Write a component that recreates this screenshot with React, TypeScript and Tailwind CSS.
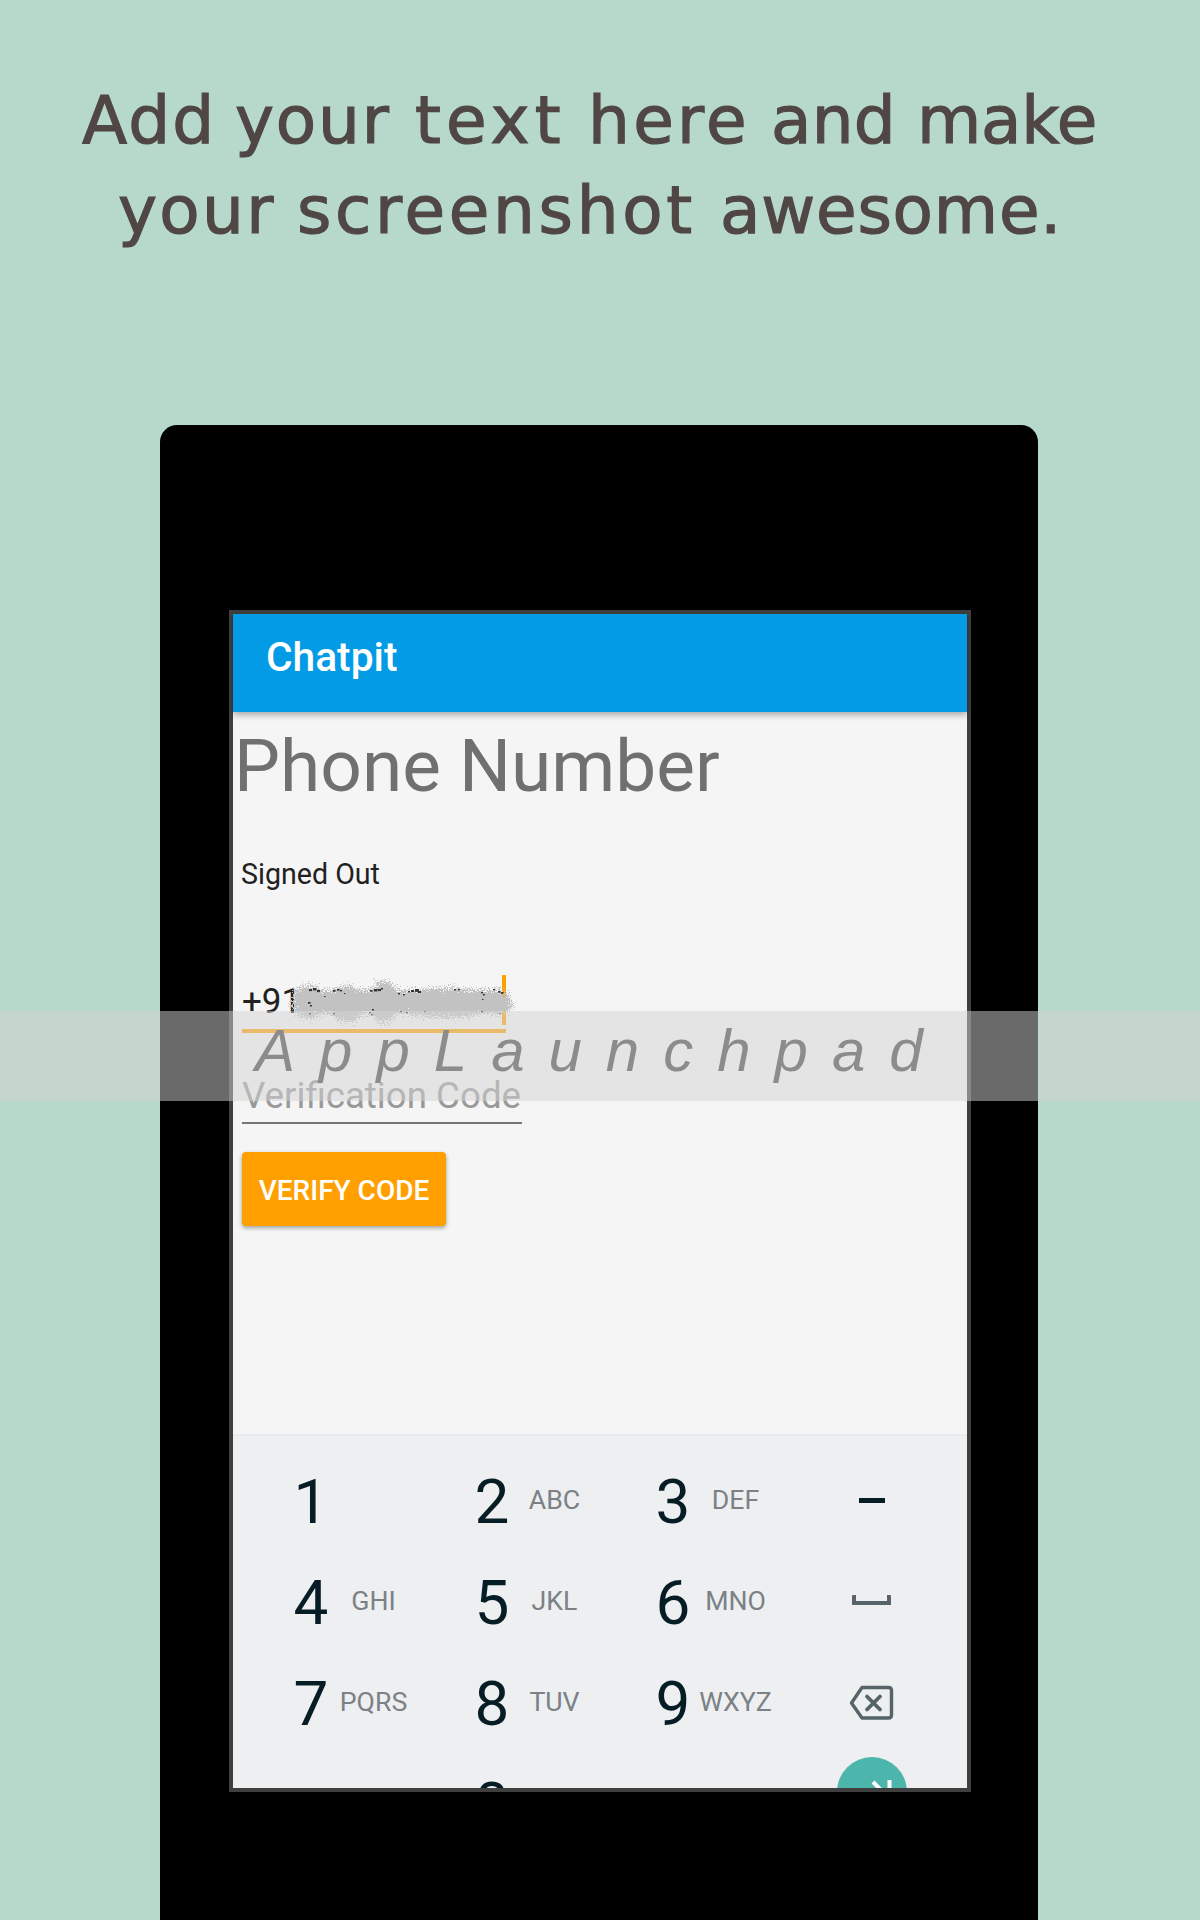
const headline = [
  [
    { text: "Add", style: "w-[153px] tracking-[2.2px]" },
    { text: "your", style: "w-[180px] tracking-[1.8px]" },
    { text: "text", style: "w-[173px] tracking-[5.1px]" },
    { text: "here", style: "w-[183px] tracking-[3.3px]" },
    { text: "and", style: "w-[146px] tracking-[0.2px]" },
    { text: "make", style: "w-[180px] tracking-[-0.3px]" },
  ],
  [
    { text: "your", style: "w-[179px] tracking-[2.3px]" },
    { text: "screenshot", style: "w-[423px] tracking-[3.7px]" },
    { text: "awesome.", style: "w-[350px] tracking-[0.8px]" },
  ],
];

function Headline() {
  return (
    <h1 className="h-[425px] pt-[76px] font-['DejaVu_Sans',sans-serif] text-[66px] leading-[90px] text-[#504745] [-webkit-text-stroke:1.2px_#504745]">
      <div className="flex whitespace-pre pl-[82px]">
        {headline[0].map((w) => (
          <span key={w.text} className={`shrink-0 ${w.style}`}>{w.text}</span>
        ))}
      </div>
      <div className="flex whitespace-pre pl-[118px]">
        {headline[1].map((w) => (
          <span key={w.text} className={`shrink-0 ${w.style}`}>{w.text}</span>
        ))}
      </div>
    </h1>
  );
}

const specks = [
  [27, 19, 3], [31, 18, 3.500], [35, 20, 3], [51, 20, 2.500], [55, 19, 2.500], [58, 20, 2],
  [88, 20, 2.500], [92, 19, 3.500], [96, 19, 3], [99, 18, 2], [129, 20, 3], [133, 19, 4], [136, 21, 3],
  [26, 32, 2.500], [28, 35, 2], [27, 43, 2], [51, 43, 2], [87, 42, 2], [90, 39, 2], [89, 44, 2],
  [116, 23, 2], [118, 41, 2], [121, 24, 2], [126, 21, 2], [172, 19, 2], [176, 19, 2], [199, 22, 2],
  [201, 24, 2], [200, 29, 1.500], [199, 41, 2], [211, 19, 2], [216, 21, 2.500], [219, 22, 2.500],
  [217, 43, 1.500], [142, 41, 1.500], [62, 23, 1.500], [42, 26, 1.500], [124, 42, 2],
];

function Scribble() {
  return (
    <svg className="absolute -top-[11px] left-[40px]" width="240" height="60" viewBox="0 0 240 60">
      <defs>
        <filter id="rough" x="-10%" y="-30%" width="120%" height="160%">
          <feTurbulence type="fractalNoise" baseFrequency="0.8" numOctaves="2" seed="4" result="n" />
          <feDisplacementMap in="SourceGraphic" in2="n" scale="19" xChannelSelector="R" yChannelSelector="G" />
        </filter>
      </defs>
      <g filter="url(#rough)" fill="#c2c2c2">
        <ellipse cx="26" cy="32" rx="16" ry="17" />
        <rect x="14" y="20" width="212" height="24" rx="11" />
        <ellipse cx="65" cy="34" rx="18" ry="18" />
        <ellipse cx="102" cy="32" rx="15" ry="21" />
        <ellipse cx="164" cy="33" rx="55" ry="15" />
        <ellipse cx="217" cy="33" rx="13" ry="11" />
      </g>
      <g fill="#333">
        {specks.map(([x, y, s]) => (
          <rect key={`${x}-${y}`} x={x} y={y} width={s} height={s * 0.7} />
        ))}
      </g>
    </svg>
  );
}

const keys = [
  ["1", ""], ["2", "ABC"], ["3", "DEF"], ["minus", ""],
  ["4", "GHI"], ["5", "JKL"], ["6", "MNO"], ["space", ""],
  ["7", "PQRS"], ["8", "TUV"], ["9", "WXYZ"], ["delete", ""],
  ["", ""], ["0", ""], ["", ""], ["next", ""],
];

function KeyIcon({ name }: { name: string }) {
  if (name === "minus") return <span className="mb-[2px] h-[5px] w-[26px] bg-[#071d26]" />;
  if (name === "space")
    return <span className="mb-[5px] h-[10px] w-[39px] rounded-[1px] border-x-4 border-b-4 border-[#56646a]" />;
  if (name === "delete")
    return (
      <svg className="mr-px mb-[2px]" width="45" height="36" viewBox="0 0 45 36" fill="none" stroke="#56646a" strokeWidth="3.4" strokeLinejoin="round">
        <path d="M13 2.500h26.500q3 0 3 3v24.500q0 3-3 3H13L2.500 18z" />
        <path d="M16.500 11.500l13 13M29.500 11.500l-13 13" transform="translate(1.5 0)" strokeWidth="3.800" strokeLinecap="round" />
      </svg>
    );
  return (
    <span className="mt-[3px] grid h-[70px] w-[70px] shrink-0 place-items-center self-start rounded-full bg-[#4db6ac]">
      <svg width="46" height="30" viewBox="0 0 46 30" fill="none" stroke="#fff" strokeWidth="4">
        <path d="M4 17h27M24 5l12 12-12 12M40.500 3v27" />
      </svg>
    </span>
  );
}

function Keypad() {
  return (
    <div className="mt-auto grid h-[354px] shrink-0 auto-rows-[101px] grid-cols-[181px_181px_181px_97px] overflow-hidden border-t-2 border-[#e8eaec] bg-[#edeff1] pt-[15px] pl-[47px]">
      {keys.map(([main, sub], i) =>
        i % 4 === 3 ? (
          <div key={i} className="flex items-center justify-center">
            <KeyIcon name={main} />
          </div>
        ) : (
          <div key={i} className="flex items-center">
            <span className="flex w-[62px] justify-center text-[62px] leading-[80px] text-[#071d26]">{main}</span>
            <span className="flex w-[63px] justify-center pb-[4px] text-[26.700px] leading-[32px] text-[#7b8185]">{sub}</span>
          </div>
        ),
      )}
    </div>
  );
}

export default function App() {
  return (
    <main className="relative h-[1920px] w-[1200px] overflow-hidden bg-[#b7d9cb]">
      <Headline />
      <div className="ml-[160px] h-[1495px] w-[878px] rounded-t-[17px] bg-black pt-[185px] pl-[69px]">
        <div className="h-[1182px] w-[742px] border-4 border-[#3f3f3f] font-[Roboto,sans-serif]">
          <div className="flex h-[1174px] flex-col bg-[#f5f5f5]">
            <header className="flex h-[98px] shrink-0 items-center bg-[#039be5] pb-[10px] pl-[33px] text-[40.7px] font-medium text-white shadow-[0_3px_6px_rgba(0,0,0,0.3)]">
              Chatpit
            </header>
            <h2 className="mt-[11px] ml-px text-[73px] leading-[86px] whitespace-nowrap text-[#707070]">Phone Number</h2>
            <p className="mt-[49px] ml-[8px] text-[28.6px] leading-[32px] text-[#212121]">Signed Out</p>
            <div className="relative mt-[91px] ml-[9px] h-[52px] w-[264px] border-b-4 border-[#ffa000] text-[35px] leading-[42px] text-[#212121]">
              +91
              <span className="absolute -top-[6px] right-0 h-[50px] w-[4px] bg-[#ffa000]" />
              <Scribble />
            </div>
            <div className="mt-[42px] ml-[9px] h-[49px] w-[280px] border-b-2 border-[#757575] text-[36.7px] leading-[41px] whitespace-nowrap text-[#999]">
              Verification Code
            </div>
            <button className="mt-[28px] ml-[9px] flex h-[74px] w-[204px] items-center justify-center rounded-[4px] bg-[#ffa000] pt-[3px] text-[28px] font-medium whitespace-nowrap text-white shadow-[0_2px_4px_rgba(0,0,0,0.35)]">
              VERIFY CODE
            </button>
            <Keypad />
          </div>
        </div>
      </div>
      <div className="absolute top-[1011px] left-0 h-[90px] w-full bg-[#d4d4d4]/50 pl-[255px] font-['Liberation_Sans',sans-serif] text-[60px] leading-[80px] tracking-[24px] whitespace-nowrap text-[#8e8c8a] italic">
        AppLaunchpad
      </div>
    </main>
  );
}
